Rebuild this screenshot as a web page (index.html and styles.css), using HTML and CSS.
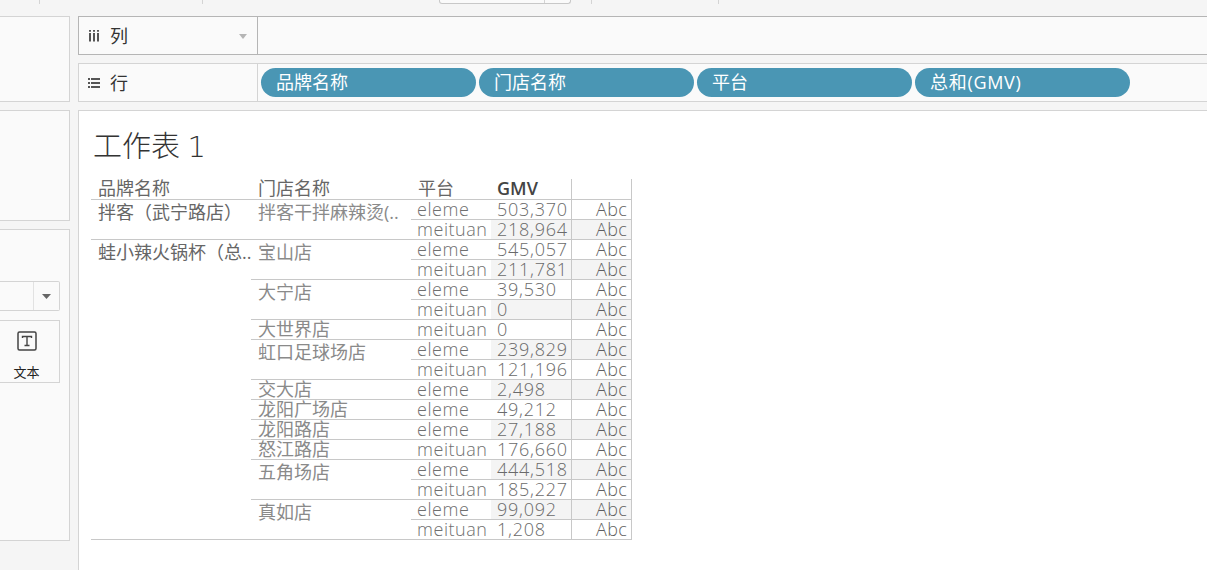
FILE: index.html
```html
<!DOCTYPE html>
<html lang="zh">
<head>
<meta charset="utf-8">
<title>工作表 1</title>
<link rel="stylesheet" href="styles.css">
</head>
<body>
<div class="topbar">
  <span class="tick t1"></span>
  <span class="tick t2"></span>
  <span class="topbox"><span class="topbox-end"></span></span>
  <span class="tick t3"></span>
  <span class="tick t4"></span>
</div>
<div class="main">
  <aside class="side">
    <div class="panel p1"></div>
    <div class="panel p2"></div>
    <div class="panel p3">
      <div class="combo"><span class="combo-btn"><svg width="9" height="5" viewBox="0 0 9 5"><path d="M0 0h9L4.5 5z" fill="#666"/></svg></span></div>
      <div class="mark-card">
        <svg class="t-icon" width="20" height="20" viewBox="0 0 20 20"><rect x="1" y="1" width="18" height="18" rx="1.5" fill="none" stroke="#444" stroke-width="1.5"/><path d="M5.5 7V5.5h9V7M10 5.5v9M7.5 14.5h5" fill="none" stroke="#444" stroke-width="1.4"/></svg>
        <span class="mark-label">文本</span>
      </div>
    </div>
  </aside>
  <section class="content">
    <div class="shelf shelf-cols">
      <div class="shelf-label">
        <svg class="shelf-icon" width="12" height="12" viewBox="0 0 12 12"><path d="M1 0h2v1.8H1zM5 0h2v1.8H5zM9 0h2v1.8H9zM1 3h2v8.5H1zM5 3h2v8.5H5zM9 3h2v8.5H9z" fill="#555"/></svg>
        <span class="shelf-name">列</span>
        <svg class="shelf-caret" width="8" height="5" viewBox="0 0 8 5"><path d="M0 0h8L4 5z" fill="#b5b5b5"/></svg>
      </div>
      <div class="shelf-body"></div>
    </div>
    <div class="shelf shelf-rows">
      <div class="shelf-label">
        <svg class="shelf-icon" width="12" height="12" viewBox="0 0 12 12"><path d="M0 1h2v2H0zM3 1h9v2H3zM0 5h2v2H0zM3 5h9v2H3zM0 9h2v2H0zM3 9h9v2H3z" fill="#555"/></svg>
        <span class="shelf-name">行</span>
      </div>
      <div class="shelf-body pills">
        <span class="pill">品牌名称</span>
        <span class="pill">门店名称</span>
        <span class="pill">平台</span>
        <span class="pill pill-measure">总和(GMV)</span>
      </div>
    </div>
    <div class="sheet">
      <h1 class="sheet-title">工作表 <span class="title-num">1</span></h1>
      <div class="viz">
        <div class="hd">品牌名称</div><div class="hd">门店名称</div><div class="hd hd-plat">平台</div><div class="hd hd-gmv">GMV</div><div class="hd hd-abc"></div>

        <div class="cell brand s2">拌客（武宁路店）</div><div class="cell store s2">拌客干拌麻辣烫(..</div><div class="cell plat">eleme</div><div class="cell num">503,370</div><div class="cell abc">Abc</div>
        <div class="cell plat">meituan</div><div class="cell num shade">218,964</div><div class="cell abc shade">Abc</div>

        <div class="cell brand s15">蛙小辣火锅杯（总..</div><div class="cell store s2">宝山店</div><div class="cell plat">eleme</div><div class="cell num">545,057</div><div class="cell abc">Abc</div>
        <div class="cell plat">meituan</div><div class="cell num shade">211,781</div><div class="cell abc shade">Abc</div>
        <div class="cell store s2">大宁店</div><div class="cell plat">eleme</div><div class="cell num">39,530</div><div class="cell abc">Abc</div>
        <div class="cell plat">meituan</div><div class="cell num shade">0</div><div class="cell abc shade">Abc</div>
        <div class="cell store">大世界店</div><div class="cell plat">meituan</div><div class="cell num">0</div><div class="cell abc">Abc</div>
        <div class="cell store s2">虹口足球场店</div><div class="cell plat">eleme</div><div class="cell num shade">239,829</div><div class="cell abc shade">Abc</div>
        <div class="cell plat">meituan</div><div class="cell num">121,196</div><div class="cell abc">Abc</div>
        <div class="cell store">交大店</div><div class="cell plat">eleme</div><div class="cell num shade">2,498</div><div class="cell abc shade">Abc</div>
        <div class="cell store">龙阳广场店</div><div class="cell plat">eleme</div><div class="cell num">49,212</div><div class="cell abc">Abc</div>
        <div class="cell store">龙阳路店</div><div class="cell plat">eleme</div><div class="cell num shade">27,188</div><div class="cell abc shade">Abc</div>
        <div class="cell store">怒江路店</div><div class="cell plat">meituan</div><div class="cell num">176,660</div><div class="cell abc">Abc</div>
        <div class="cell store s2">五角场店</div><div class="cell plat">eleme</div><div class="cell num shade">444,518</div><div class="cell abc shade">Abc</div>
        <div class="cell plat">meituan</div><div class="cell num">185,227</div><div class="cell abc">Abc</div>
        <div class="cell store s2">真如店</div><div class="cell plat">eleme</div><div class="cell num shade">99,092</div><div class="cell abc shade">Abc</div>
        <div class="cell plat">meituan</div><div class="cell num">1,208</div><div class="cell abc">Abc</div>
      </div>
    </div>
  </section>
</div>
</body>
</html>
```
FILE: styles.css
```css
* { box-sizing: border-box; }
html, body { margin: 0; height: 100%; }
body {
  width: 1207px;
  height: 570px;
  overflow: hidden;
  background: #f5f5f5;
  font-family: "Open Sans", "Noto Sans CJK SC", sans-serif;
  color: #333;
}
.topbar { height: 16px; display: flex; align-items: flex-start; }
.tick { width: 1px; height: 4px; background: #d4d4d4; }
.t1 { margin-left: 39px; }
.t2 { margin-left: 162px; }
.topbox {
  width: 132px; height: 4px; margin-left: 236px;
  border: 1px solid #c8c8c8; border-top: 0; border-radius: 0 0 3px 3px;
  background: #fafafa; display: flex; justify-content: flex-end;
}
.topbox-end { width: 26px; border-left: 1px solid #d4d4d4; }
.t3 { margin-left: 20px; }
.t4 { margin-left: 126px; }
.main { display: flex; gap: 8px; height: 554px; }
.side { width: 70px; display: flex; flex-direction: column; gap: 8px; }
.panel { background: #fafafa; border: 1px solid #d4d4d4; border-left: 0; }
.p1 { height: 86px; }
.p2 { height: 111px; }
.p3 { height: 312px; padding: 51px 9px 0 0; display: flex; flex-direction: column; gap: 9px; }
.combo {
  height: 30px; background: #fafafa; border: 1px solid #d4d4d4; border-left: 0;
  border-radius: 0 2px 2px 0; display: flex; justify-content: flex-end;
}
.combo-btn { width: 26px; border-left: 1px solid #e2e2e2; display: flex; align-items: center; justify-content: center; }
.mark-card {
  height: 63px; border: 1px solid #d4d4d4; border-left: 0;
  display: flex; flex-direction: column; align-items: center; padding-top: 10px;
}
.t-icon { display: block; margin-left: -6px; }
.mark-label { font-size: 13px; line-height: 16px; margin-top: 13px; margin-left: -6px; color: #222; }
.content { flex: 1; display: flex; flex-direction: column; gap: 8px; min-width: 0; }
.shelf { height: 39px; display: flex; background: #fafafa; border: 1px solid #d4d4d4; border-right: 0; }
.shelf-cols { border-color: #b5b5b5; }
.shelf-cols .shelf-label { border-color: #b5b5b5; }
.shelf-label {
  width: 179px; border-right: 1px solid #d4d4d4; display: flex; align-items: center;
  padding-left: 9px; position: relative;
}
.shelf-icon { display: block; }
.shelf-name { font-size: 18px; line-height: 24px; margin-left: 10px; color: #333; }
.shelf-caret { position: absolute; right: 10px; top: 17px; }
.shelf-body { flex: 1; }
.pills { display: flex; gap: 3px; padding: 4px 0 0 3px; }
.pill {
  width: 215px; height: 29px; border-radius: 14.5px; background: #4a96b4; color: #fff;
  font-size: 18px; line-height: 29px; padding-left: 15px;
}
.pill-measure { letter-spacing: 0.7px; }
.sheet { flex: 1; background: #fff; border: 1px solid #d4d4d4; border-right: 0; border-bottom: 0; padding: 0 0 0 12px; min-height: 0; }
.sheet-title { margin: 13px 0 0 2px; height: 44px; font-size: 29px; line-height: 44px; font-weight: 300; color: #333; }
.title-num { font-family: "DejaVu Sans", sans-serif; font-weight: 200; font-size: 29px; }
.viz {
  display: grid;
  grid-template-columns: 160px 160px 80px 80px 61px;
  grid-auto-rows: 20px;
  width: 541px;
  margin-top: 11px;
  font-size: 18px;
  border-bottom: 1px solid #c8c8c8;
}
.hd, .cell { white-space: nowrap; }
.hd { padding-left: 7px; color: #666; line-height: 18px; }
.hd-gmv { padding-left: 6px; font-weight: 600; color: #444; line-height: 19px; }
.hd-abc { border-left: 1px solid #c8c8c8; border-right: 1px solid #c8c8c8; }
.cell { border-top: 1px solid #c8c8c8; line-height: 19px; }
.s2 { grid-row: span 2; padding-top: 3px; }
.s15 { grid-row: span 15; padding-top: 3px; }
.brand { color: #666; padding-left: 7px; }
.store { color: #8a8a8a; padding-left: 7px; }
.plat { color: #6f6f6f; padding-left: 6px; font-weight: 300; letter-spacing: 0.55px; }
.num { color: #6a6a6a; padding-left: 6px; font-weight: 300; letter-spacing: 0.75px; }
.abc { color: #5f5f5f; text-align: right; padding-right: 4px; font-weight: 300; letter-spacing: 0.3px; border-left: 1px solid #c8c8c8; border-right: 1px solid #c8c8c8; }
.shade { background: #f4f4f4; }
```
